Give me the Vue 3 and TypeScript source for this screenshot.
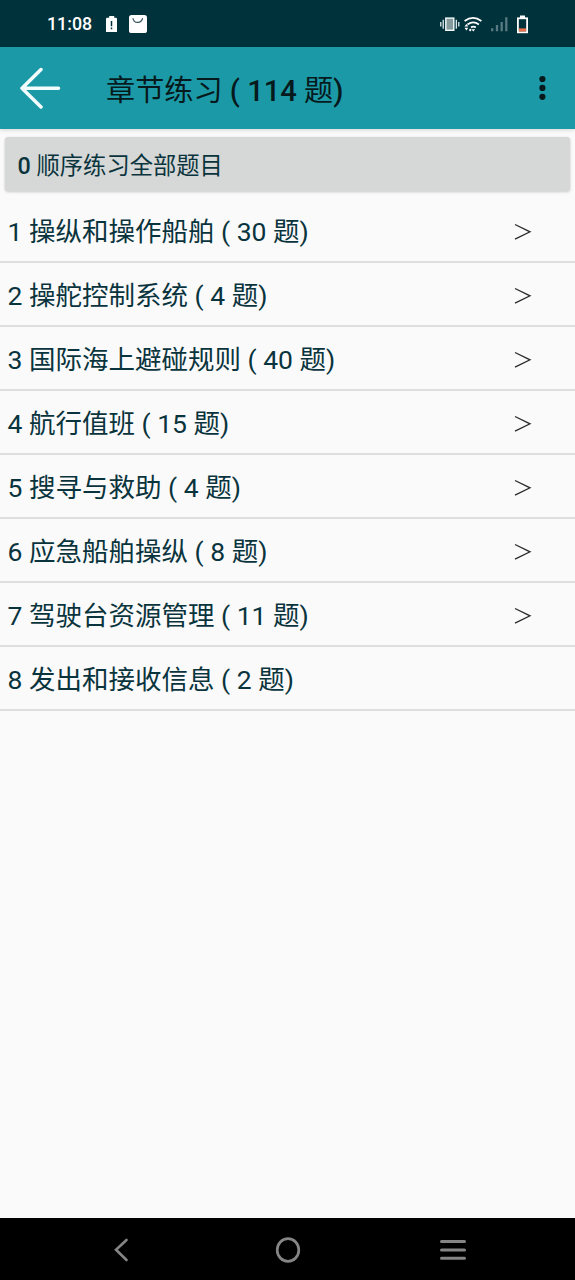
<script setup lang="ts">
interface Chapter {
  id: number
  name: string
  count: number
  expandable: boolean
}

const chapters: Chapter[] = [
  { id: 1, name: '操纵和操作船舶', count: 30, expandable: true },
  { id: 2, name: '操舵控制系统', count: 4, expandable: true },
  { id: 3, name: '国际海上避碰规则', count: 40, expandable: true },
  { id: 4, name: '航行值班', count: 15, expandable: true },
  { id: 5, name: '搜寻与救助', count: 4, expandable: true },
  { id: 6, name: '应急船舶操纵', count: 8, expandable: true },
  { id: 7, name: '驾驶台资源管理', count: 11, expandable: true },
  { id: 8, name: '发出和接收信息', count: 2, expandable: false },
]

const total = chapters.reduce((sum, c) => sum + c.count, 0)
</script>

<template>
  <div class="screen">
    <header class="status">
      <div class="status-left">
        <span class="clock">11:08</span>
        <svg class="alert" width="12" height="18" viewBox="0 0 12 18">
          <path d="M3.2 1h5v1.7h1.6q1.2 0 1.2 1.2V17H0V3.9q0-1.2 1.2-1.2h2z" fill="#fff" />
          <path d="M5.5 6v5.2M5.5 12.4v1.8" stroke="#00323c" stroke-width="1.5" />
        </svg>
        <svg class="bag" width="18" height="18" viewBox="0 0 18 18">
          <rect width="18" height="18" rx="2.6" fill="#fff" />
          <path d="M4 3.2c.6 5.6 8.6 5.6 9.6 0" fill="none" stroke="#31545b" stroke-width="1.2" />
        </svg>
      </div>
      <svg class="status-right" width="90" height="22" viewBox="0 0 90 22">
        <g fill="none" stroke="#f2fafa" stroke-width="1.2">
          <rect x="5.8" y="5.1" width="8" height="12.2" fill="#849a9d" stroke-width="1.4" />
          <path d="M3.2 6.7v9M.8 9v4.5M16.3 6.7v9M18.8 9v4.5" />
        </g>
        <g fill="none" stroke="#fff" stroke-width="1.8">
          <path d="M24.6 8q8.4-6.2 16.8 0M27.5 11.4q5.7-4 11.4 0M31 14.4q2.4-1.4 4.8 0" />
        </g>
        <path d="M33.3 18.4l-1.9-2.2h3.8zM26.4 10.9l1.9 2.7h-3.8zM24.5 14.8h3.8l-1.9 2.7zM30.2 15.6l1.4 1.4-1.4 1.4-1.4-1.4z" fill="#fff" />
        <path d="M52.2 15.3v3M57 12v6.3M61.7 9v9.3M66.3 4.2v14.1" stroke="#587a80" stroke-width="2.3" />
        <rect x="80" y="2.5" width="5" height="3" fill="#fff" />
        <rect x="77.9" y="5.3" width="9.2" height="14" fill="#00323c" stroke="#fff" stroke-width="1.8" />
        <rect x="79" y="15.4" width="7" height="3" fill="#ee7048" />
      </svg>
    </header>

    <div class="toolbar">
      <svg class="back" width="42" height="44" viewBox="0 0 42 44">
        <path d="M21 3.5L2 22.3L21 41M2 22.3H38.5" fill="none" stroke="#f4fdfd" stroke-width="3.5" stroke-linecap="round" stroke-linejoin="round" />
      </svg>
      <h1 class="title">章节练习 <b>( {{ total }}</b> 题<b>)</b></h1>
      <svg class="more" width="8" height="26" viewBox="0 0 8 26">
        <g fill="#06191c">
          <circle cx="4.4" cy="4" r="3.1" />
          <circle cx="4.4" cy="12.9" r="3.1" />
          <circle cx="4.4" cy="21.8" r="3.1" />
        </g>
      </svg>
    </div>

    <main class="content">
      <button class="all" type="button"><b>0</b> 顺序练习全部题目</button>
      <ul class="list">
        <li v-for="c in chapters" :key="c.id" class="row">
          <span>{{ c.id }} {{ c.name }} ( {{ c.count }} 题)</span>
          <svg v-if="c.expandable" class="chevron" width="18" height="18" viewBox="0 0 18 18">
            <path d="M1 1.5L16 8.8L1 16.1" fill="none" stroke="#292b2c" stroke-width="1.3" />
          </svg>
        </li>
      </ul>
    </main>

    <nav class="nav">
      <svg width="16" height="26" viewBox="0 0 16 26">
        <path d="M13.5 3L3 12.8L13.5 23" fill="none" stroke="#858585" stroke-width="2.6" stroke-linecap="round" />
      </svg>
      <svg class="home" width="26" height="28" viewBox="0 0 26 28">
        <ellipse cx="13" cy="14" rx="10.8" ry="11.3" fill="none" stroke="#858585" stroke-width="2.7" />
      </svg>
      <svg width="28" height="26" viewBox="0 0 28 26">
        <path d="M2.5 4.5h23M2.5 12.9h23M2.5 21.3h23" stroke="#858585" stroke-width="3" stroke-linecap="round" />
      </svg>
    </nav>
  </div>
</template>

<style>
body {
  margin: 0;
}
</style>

<style scoped>
.screen {
  width: 575px;
  height: 1280px;
  display: flex;
  flex-direction: column;
  overflow: hidden;
  background: #fafafa;
  color: #0a343d;
  font-family: Roboto, "Noto Sans CJK SC", sans-serif;
}
svg {
  display: block;
  flex: none;
}
b {
  font-weight: 500;
}
.status {
  height: 47px;
  box-sizing: border-box;
  padding: 0 45px 0 47px;
  display: flex;
  justify-content: space-between;
  align-items: center;
  background: #00323c;
}
.status-left {
  display: flex;
  align-items: center;
}
.clock {
  width: 45px;
  color: #fff;
  font-size: 17.8px;
  font-weight: 500;
  line-height: 24px;
}
.alert {
  margin-left: 14px;
}
.bag {
  margin-left: 11px;
}
.toolbar {
  height: 82px;
  box-sizing: border-box;
  padding: 0 29px 0 20px;
  display: flex;
  align-items: center;
  background: #1c99a6;
  box-shadow: 0 1px 4px rgba(0, 0, 0, 0.15);
}
.title {
  margin: 6px 0 0 44px;
  flex: 1;
  font-size: 29.15px;
  line-height: 40px;
  font-weight: 400;
  color: #06191c;
  white-space: nowrap;
}
.content {
  flex: 1;
  padding-top: 8px;
}
.all {
  display: block;
  width: 565px;
  height: 54px;
  margin: 0 5px;
  padding: 4px 13px 0 12.5px;
  border: 0;
  border-radius: 3px;
  background: #d6d8d7;
  box-shadow: 0 1px 3px rgba(0, 0, 0, 0.2);
  color: #0a343d;
  font-family: inherit;
  font-size: 23.3px;
  line-height: 34px;
  text-align: left;
}
.list {
  margin: 8px 0 0;
  padding: 0;
  list-style: none;
}
.row {
  height: 64px;
  box-sizing: border-box;
  padding: 4px 43px 0 7.5px;
  display: flex;
  align-items: center;
  justify-content: space-between;
  border-bottom: 2px solid #dedede;
  font-size: 26.5px;
  line-height: 38px;
  white-space: nowrap;
}
.nav {
  height: 62px;
  display: flex;
  align-items: center;
  justify-content: space-between;
  box-sizing: border-box;
  padding: 1px 108px 0 113px;
  background: #000;
}
.home {
  margin-left: 7px;
}
</style>
